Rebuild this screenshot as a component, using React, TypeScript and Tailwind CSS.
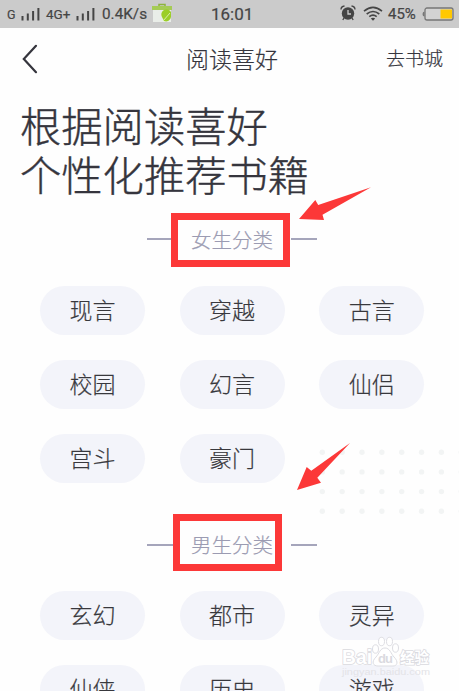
const female = ['现言', '穿越', '古言', '校园', '幻言', '仙侣', '宫斗', '豪门'];
const male = ['玄幻', '都市', '灵异', '仙侠', '历史', '游戏'];

function Signal() {
  return (
    <svg className="h-[14px] w-[19px] shrink-0" viewBox="0 0 19 14" stroke="#454545" strokeWidth="2">
      <path d="M1.5 9v4.5M6.8 6.5v7M12.1 4v9.5M17.4 1v12.5" />
    </svg>
  );
}

function StatusBar() {
  return (
    <div className="relative flex h-7 w-full items-center bg-[#cbcbcb] font-['Roboto','Liberation_Sans',sans-serif] text-[#454545]">
      <span className="ml-[7px] w-[14px] pt-[2px] text-[12.5px] leading-none">G</span>
      <Signal />
      <span className="ml-[6px] w-[30px] whitespace-nowrap pt-[1px] text-[13.5px] leading-none">4G+</span>
      <Signal />
      <span className="ml-[7px] w-[50px] whitespace-nowrap pt-[1px] text-[15.3px] leading-none">0.4K/s</span>
      <svg className="-mt-[3px] h-[20px] w-[20px] shrink-0" viewBox="0 0 20 20">
        <path d="M7 4V1.5h6V4" fill="none" stroke="#8db33c" strokeWidth="1.5" />
        <path d="M0 3h20v4H0z" fill="#a5cb55" />
        <path d="M1 7h18v12H1z" fill="#e9ede8" />
        <path d="M10 14a5 5 0 0 1 9-5v5a5 5 0 0 1-7 4z" fill="#9bce29" />
        <path d="m11 18 7-8" stroke="#d9edaa" strokeWidth="1" />
      </svg>
      <span className="ml-[39px] w-[44px] text-[17px] leading-none">16:01</span>
      <svg className="-mt-[2px] ml-[85px] h-[16px] w-[16px] shrink-0" viewBox="0 0 16 16">
        <circle cx="8" cy="8.5" r="6.2" fill="#454545" />
        <path d="M1 4.500q0-3 3.500-3.500M15 4.500q0-3-3.500-3.500M4 13l-1.200 2M12 13l1.200 2" fill="none" stroke="#454545" strokeWidth="1.3" />
        <path d="M8 5v4h3" fill="none" stroke="#cbcbcb" strokeWidth="1.3" />
      </svg>
      <svg className="-mt-[1px] ml-[7px] h-[15px] w-[20px] shrink-0" viewBox="0 0 20 15" fill="none" stroke="#454545" strokeWidth="1.6">
        <path d="M1 5.200q9-7.500 18 0M3.700 8q6.300-5 12.600 0M6.300 10.700q3.700-3 7.400 0" />
        <path d="m7.800 12.500q2.200-1.500 4.400 0L10 14.800z" fill="#454545" stroke="none" />
      </svg>
      <span className="ml-[5px] w-[32px] whitespace-nowrap text-[15px] leading-none">45%</span>
      <svg className="-mt-[1px] ml-[2px] h-[14px] w-[32px] shrink-0" viewBox="0 0 32 14">
        <rect x="3" y="1" width="28" height="12" rx="2" fill="#d3d3d3" stroke="#777" strokeWidth="1.3" />
        <path d="M2.500 4.500q-2 0-2 2.500t2 2.500z" fill="#777" />
        <path d="M18.500 2.500H30v9H18.500z" fill="#ffc800" />
      </svg>
    </div>
  );
}

function SectionTitle({ label, box }: { label: string; box: string }) {
  return (
    <div className="relative flex h-[30px] w-full items-center pl-[147px]">
      <i className="h-[2px] w-[26px] bg-[#a5a5bb]" />
      <span className="w-[118px] whitespace-nowrap pl-[18px] text-[20.5px] font-light leading-none text-[#9b9bb2]">{label}</span>
      <i className="h-[2px] w-[26px] bg-[#a5a5bb]" />
      <div className={'absolute border-[7px] border-[#fc3838] ' + box} />
    </div>
  );
}

function Chips({ items }: { items: string[] }) {
  return (
    <div className="grid grid-cols-[repeat(3,105px)] gap-x-[34.6px] gap-y-[25.5px] pl-10">
      {items.map((t) => (
        <button key={t} className="flex h-[48.5px] items-center justify-center rounded-full bg-[#f3f4fa] pb-[2px] text-[23px] font-light leading-none text-[#38383d]">
          {t}
        </button>
      ))}
    </div>
  );
}

function Dots() {
  return (
    <svg className="absolute left-[319px] top-[449px] h-[66px] w-[140px]" viewBox="0 0 140 66" fill="#f2f4f4">
      {[0, 1, 2, 3].map((r) =>
        [0, 1, 2, 3, 4, 5, 6, 7].map((c) => <circle key={r + '-' + c} cx={3.3 + c * 19.85} cy={3.2 + r * 19.7} r="2.7" />),
      )}
    </svg>
  );
}

function Watermark() {
  return (
    <svg className="absolute left-[341px] top-[636px] h-[42px] w-[92px] font-['Liberation_Sans','Noto_Sans_CJK_SC',sans-serif]" viewBox="0 0 92 42">
      <g fill="#fff" stroke="#dddde2" strokeWidth="1">
        <ellipse cx="34.5" cy="13" rx="3" ry="4.2" />
        <ellipse cx="40.5" cy="5.5" rx="3" ry="4.2" />
        <ellipse cx="48.5" cy="5.5" rx="3" ry="4.2" />
        <ellipse cx="54.5" cy="12" rx="3" ry="4.2" />
        <path d="M44 12c5 0 6 6 9 9 5 5 3 9-1 9H37c-5 0-7-4-2-9 3-3 4-9 9-9z" />
      </g>
      <g fontWeight="700" stroke="#dadadf" strokeWidth="1.6" fill="#fff" paintOrder="stroke">
        <text x="1" y="28" fontSize="20" textLength="30" lengthAdjust="spacingAndGlyphs">Bai</text>
        <text x="59" y="27" fontSize="15" textLength="29" lengthAdjust="spacingAndGlyphs">经验</text>
      </g>
      <text x="37" y="27" fontSize="13" fontWeight="700" fill="#dadadf" textLength="15">du</text>
      <text x="1" y="38.5" fontSize="9.5" fill="#e3e3e7" textLength="88" lengthAdjust="spacingAndGlyphs">jingyan.baidu.com</text>
    </svg>
  );
}

export default function App() {
  return (
    <div className="relative h-[691px] w-[459px] overflow-hidden bg-[#fefefe] font-['Noto_Sans_CJK_SC',sans-serif] text-[#35353d] [-webkit-text-stroke:0.2px]">
      <StatusBar />
      <header className="flex h-[62px] items-center">
        <svg className="ml-[22px] h-[30px] w-[16px]" viewBox="0 0 16 30" fill="none" stroke="#35353d" strokeWidth="2.2" strokeLinecap="round">
          <path d="M14 1.800 1.800 15 14 28.200" />
        </svg>
        <h1 className="ml-[148px] w-[94px] whitespace-nowrap pb-[2px] text-[23px] font-light leading-none">阅读喜好</h1>
        <span className="ml-[106px] whitespace-nowrap pb-[3px] text-[19px] font-light leading-none">去书城</span>
      </header>
      <h2 className="mt-[10px] whitespace-nowrap pl-5 text-[41.3px] font-light leading-[48.7px] [-webkit-text-stroke:0.4px]">
        根据阅读喜好
        <br />
        个性化推荐书籍
      </h2>
      <div className="mt-[26.6px]">
        <SectionTitle label="女生分类" box="left-[171px] top-[-11px] h-[54px] w-[119px]" />
      </div>
      <div className="mt-[32px]">
        <Chips items={female} />
      </div>
      <div className="mt-[47px]">
        <SectionTitle label="男生分类" box="left-[173px] top-[-16px] h-[57px] w-[109px]" />
      </div>
      <div className="mt-[31.5px]">
        <Chips items={male} />
      </div>
      <Dots />
      <svg className="absolute left-0 top-0 h-[691px] w-[459px]" viewBox="0 0 459 691" fill="#fc3838">
        <path d="M299 219 315.300 200l2.900 5L371 187.300l-48.500 27.500 1.500 5.200z" />
        <path d="m297 490 9.700-23 4.600 3.700L350 443l-32.700 34.700 3.700 5z" />
      </svg>
      <Watermark />
    </div>
  );
}
